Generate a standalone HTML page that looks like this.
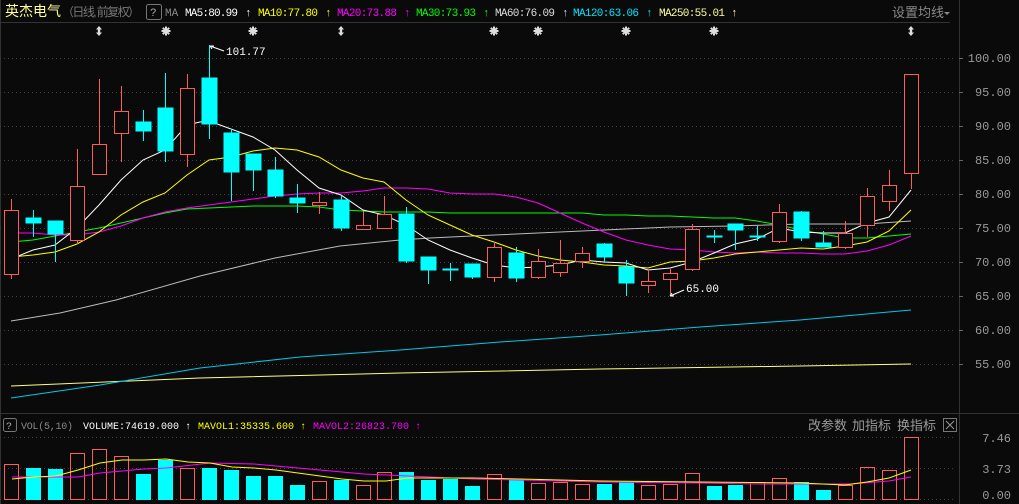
<!DOCTYPE html>
<html><head><meta charset="utf-8"><style>
html,body{margin:0;padding:0;background:#0a0a0a;}
svg{display:block;}
text{font-family:"Liberation Mono","Noto Sans CJK SC",monospace;}
.cn{font-family:"Liberation Sans","Noto Sans CJK SC",sans-serif;}
</style></head><body>
<svg width="1019" height="504" viewBox="0 0 1019 504" xmlns="http://www.w3.org/2000/svg">
<defs>
<g id="st" stroke="#ddd" stroke-width="2"><line x1="0" y1="-4.5" x2="0" y2="4.5"/><line x1="-4.5" y1="0" x2="4.5" y2="0"/><line x1="-3.2" y1="-3.2" x2="3.2" y2="3.2"/><line x1="-3.2" y1="3.2" x2="3.2" y2="-3.2"/><circle r="2.2" fill="#ddd" stroke="none"/></g>
<g id="ud" fill="#ddd"><path d="M0 -5 L3 -1.5 H1.2 V1.5 H3 L0 5 L-3 1.5 H-1.2 V-1.5 H-3 Z"/></g>
</defs>
<rect width="1019" height="504" fill="#0a0a0a"/>
<line x1="0.5" y1="0" x2="0.5" y2="504" stroke="#333"/>
<line x1="959.5" y1="0" x2="959.5" y2="504" stroke="#333"/>
<line x1="0" y1="22.5" x2="950" y2="22.5" stroke="#333"/>
<line x1="0" y1="413.5" x2="1019" y2="413.5" stroke="#333"/>
<!-- header -->
<text x="5" y="16" class="cn" font-size="14" fill="#ffff99">英杰电气</text>
<text x="62" y="16" class="cn" font-size="12" fill="#777" textLength="78">（日线, 前复权）</text>
<rect x="146.5" y="4.5" width="15" height="15" rx="2" fill="none" stroke="#777"/>
<text x="150" y="16" font-size="11" fill="#aaa">?</text>
<g font-size="11">
<text x="165" y="16" fill="#888">MA</text>
<text x="185" y="16" fill="#fff" textLength="53">MA5:80.99</text><text x="245" y="16" fill="#fff">↑</text>
<text x="258" y="16" fill="#ffff00" textLength="60">MA10:77.80</text><text x="325" y="16" fill="#ffff00">↑</text>
<text x="337" y="16" fill="#ff00ff" textLength="60">MA20:73.88</text><text x="404" y="16" fill="#ff00ff">↑</text>
<text x="416" y="16" fill="#00ff00" textLength="60">MA30:73.93</text><text x="483" y="16" fill="#00ff00">↑</text>
<text x="495" y="16" fill="#ddd" textLength="60">MA60:76.09</text><text x="562" y="16" fill="#ddd">↑</text>
<text x="573" y="16" fill="#00e5ff" textLength="66">MA120:63.06</text><text x="646" y="16" fill="#00e5ff">↑</text>
<text x="659" y="16" fill="#ffff99" textLength="66">MA250:55.01</text><text x="731" y="16" fill="#ffff99">↑</text>
</g>
<text x="892" y="17" class="cn" font-size="13" fill="#888">设置均线</text>
<path d="M944 12h6l-3 3z" fill="#888"/>
<!-- markers -->
<use href="#ud" x="99" y="31"/><use href="#ud" x="341" y="31"/><use href="#ud" x="911" y="31"/>
<use href="#st" x="166" y="31"/><use href="#st" x="253" y="31"/><use href="#st" x="494" y="31"/><use href="#st" x="538" y="31"/><use href="#st" x="626" y="31"/><use href="#st" x="714" y="31"/>
<!-- grid -->
<g stroke="#444" stroke-dasharray="1,3">
<line x1="0" y1="58.5" x2="956" y2="58.5"/><line x1="0" y1="92.5" x2="956" y2="92.5"/><line x1="0" y1="126.5" x2="956" y2="126.5"/><line x1="0" y1="160.5" x2="956" y2="160.5"/><line x1="0" y1="194.5" x2="956" y2="194.5"/><line x1="0" y1="228.5" x2="956" y2="228.5"/><line x1="0" y1="262.5" x2="956" y2="262.5"/><line x1="0" y1="296.5" x2="956" y2="296.5"/><line x1="0" y1="330.5" x2="956" y2="330.5"/><line x1="0" y1="364.5" x2="956" y2="364.5"/>
<line x1="0" y1="437.5" x2="956" y2="437.5"/><line x1="0" y1="468.5" x2="956" y2="468.5"/><line x1="0" y1="499.5" x2="956" y2="499.5"/>
</g>
<g font-size="12" fill="#999" text-anchor="end">
<text x="1011" y="62">100.00</text><text x="1011" y="96">95.00</text><text x="1011" y="130">90.00</text><text x="1011" y="164">85.00</text><text x="1011" y="198">80.00</text><text x="1011" y="232">75.00</text><text x="1011" y="266">70.00</text><text x="1011" y="300">65.00</text><text x="1011" y="334">60.00</text><text x="1011" y="368">55.00</text>
<text x="1011" y="442">7.46</text><text x="1011" y="473">3.73</text><text x="1011" y="499">0.00</text>
</g>
<g stroke="#666"><line x1="959" y1="58.5" x2="963" y2="58.5"/><line x1="959" y1="92.5" x2="963" y2="92.5"/><line x1="959" y1="126.5" x2="963" y2="126.5"/><line x1="959" y1="160.5" x2="963" y2="160.5"/><line x1="959" y1="194.5" x2="963" y2="194.5"/><line x1="959" y1="228.5" x2="963" y2="228.5"/><line x1="959" y1="262.5" x2="963" y2="262.5"/><line x1="959" y1="296.5" x2="963" y2="296.5"/><line x1="959" y1="330.5" x2="963" y2="330.5"/><line x1="959" y1="364.5" x2="963" y2="364.5"/></g>
<!-- MA lines -->
<g fill="none" stroke-width="1">
<polyline stroke="#ffff88" points="11,386 200,378 400,373 600,369 800,366 911,364"/>
<polyline stroke="#00c8e8" points="11,398 100,385 200,368 300,357 400,350 500,342 600,335 700,327 800,320 911,310"/>
<polyline stroke="#bbb" points="11,321 60,313 116,300 200,276 275,258 340,246 400,240 430,238 472,236 538,233 604,230 670,227 735,226 801,224 867,224 911,221"/>
<polyline stroke="#00ff00" points="11,242 33,240 55,236 77,232 99,228 121,223 143,218 165,213 187,209 209,208 231,207 253,206 275,206 297,206 319,207 341,210 363,211 384,212 406,212 428,212 450,213 472,213 494,213 516,213 538,213 560,213 582,213 604,215 626,215 648,216 670,216 692,217 714,218 735,218 757,221 779,225 801,230 823,234 845,238 867,238 889,236 911,234"/>
<polyline stroke="#ff00ff" points="11,233 33,233 55,235 77,235 99,232 121,226 143,218 165,212 187,208 209,205 231,202 253,199 275,196 297,194 319,193 341,193 363,191 384,188 406,188 428,189 450,193 472,194 494,194 516,197 538,203 560,213 582,223 604,232 626,240 648,245 670,249 692,250 714,252 735,253 757,252 779,253 801,253 823,254 845,254 867,251 889,245 911,236"/>
<polyline stroke="#ffff00" points="11,257 33,255 55,252 77,244 99,232 121,215 143,202 165,193 187,175 209,160 231,157 253,151 275,148 297,150 319,157 341,170 363,178 384,182 406,200 428,215 450,225 472,235 494,242 516,250 538,256 560,260 582,262 604,265 626,266 648,268 670,262 692,261 714,258 735,254 757,252 779,250 801,248 823,249 845,246 867,242 889,231 911,210"/>
<polyline stroke="#fff" points="11,259 33,250 55,245 77,228 99,205 121,180 143,160 165,150 187,125 200,122 209,121 220,125 253,137 275,150 297,170 319,188 341,195 363,210 384,215 406,225 428,240 450,250 472,258 494,265 516,268 538,267 560,265 582,260 604,262 626,263 648,270 670,268 692,262 714,253 735,244 757,239 779,228 801,232 823,233 845,233 867,223 889,217 911,190"/>
</g>
<!-- candles -->
<g stroke="#ff5b5b" fill="#0a0a0a">
<line x1="11.5" y1="199" x2="11.5" y2="279"/><rect x="4.5" y="210.5" width="14" height="64"/>
<line x1="77.5" y1="149" x2="77.5" y2="244"/><rect x="70.5" y="186.5" width="14" height="54"/>
<line x1="99.5" y1="79" x2="99.5" y2="174"/><rect x="92.5" y="144.5" width="14" height="30"/>
<line x1="121.5" y1="86" x2="121.5" y2="162"/><rect x="114.5" y="111.5" width="14" height="22"/>
<line x1="187.5" y1="74" x2="187.5" y2="167"/><rect x="180.5" y="88.5" width="14" height="66"/>
<line x1="319.5" y1="192" x2="319.5" y2="214"/><rect x="312.5" y="202.5" width="14" height="3"/>
<line x1="363.5" y1="211" x2="363.5" y2="229"/><rect x="356.5" y="225.5" width="14" height="4"/>
<line x1="384.5" y1="196" x2="384.5" y2="228"/><rect x="377.5" y="214.5" width="14" height="14"/>
<line x1="494.5" y1="242" x2="494.5" y2="282"/><rect x="487.5" y="247.5" width="14" height="30"/>
<line x1="538.5" y1="249" x2="538.5" y2="279"/><rect x="531.5" y="261.5" width="14" height="16"/>
<line x1="560.5" y1="240" x2="560.5" y2="277"/><rect x="553.5" y="263.5" width="14" height="9"/>
<line x1="582.5" y1="247" x2="582.5" y2="268"/><rect x="575.5" y="253.5" width="14" height="8"/>
<line x1="648.5" y1="269" x2="648.5" y2="293"/><rect x="641.5" y="281.5" width="14" height="4"/>
<line x1="670.5" y1="269" x2="670.5" y2="296"/><rect x="663.5" y="273.5" width="14" height="6"/>
<line x1="692.5" y1="224" x2="692.5" y2="271"/><rect x="685.5" y="229.5" width="14" height="40"/>
<line x1="779.5" y1="204" x2="779.5" y2="243"/><rect x="772.5" y="212.5" width="14" height="29"/>
<line x1="845.5" y1="221" x2="845.5" y2="249"/><rect x="838.5" y="233.5" width="14" height="14"/>
<line x1="867.5" y1="188" x2="867.5" y2="237"/><rect x="860.5" y="196.5" width="14" height="29"/>
<line x1="889.5" y1="170" x2="889.5" y2="211"/><rect x="882.5" y="185.5" width="14" height="16"/>
<line x1="911.5" y1="74" x2="911.5" y2="189"/><rect x="904.5" y="74.5" width="14" height="99"/>
</g>
<g stroke="#00ffff" fill="#00ffff">
<line x1="33.5" y1="210" x2="33.5" y2="237"/><rect x="26" y="218" width="15" height="5"/>
<line x1="55.5" y1="221" x2="55.5" y2="262"/><rect x="48" y="221" width="15" height="13"/>
<line x1="143.5" y1="110" x2="143.5" y2="141"/><rect x="136" y="122" width="15" height="9"/>
<line x1="165.5" y1="73" x2="165.5" y2="162"/><rect x="158" y="108" width="15" height="43"/>
<line x1="209.5" y1="45" x2="209.5" y2="139"/><rect x="202" y="78" width="15" height="46"/>
<line x1="231.5" y1="129" x2="231.5" y2="201"/><rect x="224" y="133" width="15" height="39"/>
<line x1="253.5" y1="154" x2="253.5" y2="191"/><rect x="246" y="154" width="15" height="16"/>
<line x1="275.5" y1="157" x2="275.5" y2="198"/><rect x="268" y="170" width="15" height="26"/>
<line x1="297.5" y1="184" x2="297.5" y2="213"/><rect x="290" y="198" width="15" height="5"/>
<line x1="341.5" y1="196" x2="341.5" y2="231"/><rect x="334" y="200" width="15" height="28"/>
<line x1="406.5" y1="207" x2="406.5" y2="263"/><rect x="399" y="214" width="15" height="47"/>
<line x1="428.5" y1="257" x2="428.5" y2="284"/><rect x="421" y="257" width="15" height="13"/>
<line x1="450.5" y1="263" x2="450.5" y2="281"/><rect x="443" y="269" width="15" height="1"/>
<line x1="472.5" y1="264" x2="472.5" y2="279"/><rect x="465" y="264" width="15" height="13"/>
<line x1="516.5" y1="247" x2="516.5" y2="282"/><rect x="509" y="253" width="15" height="25"/>
<line x1="604.5" y1="243" x2="604.5" y2="262"/><rect x="597" y="244" width="15" height="13"/>
<line x1="626.5" y1="260" x2="626.5" y2="296"/><rect x="619" y="267" width="15" height="16"/>
<line x1="714.5" y1="230" x2="714.5" y2="243"/><rect x="707" y="236" width="15" height="1"/>
<line x1="735.5" y1="224" x2="735.5" y2="250"/><rect x="728" y="224" width="15" height="6"/>
<line x1="757.5" y1="226" x2="757.5" y2="241"/><rect x="750" y="236" width="15" height="1"/>
<line x1="801.5" y1="211" x2="801.5" y2="241"/><rect x="794" y="212" width="15" height="26"/>
<line x1="823.5" y1="231" x2="823.5" y2="247"/><rect x="816" y="243" width="15" height="4"/>
</g>
<!-- annotations -->
<path d="M210 46 L224 51 M210 46 l4 0 M210 46 l2 3" stroke="#fff" fill="none"/>
<text x="226" y="55" font-size="11" fill="#fff">101.77</text>
<path d="M670 296 L684 290 M670 296 l4 0 M670 296 l2 -3" stroke="#fff" fill="none"/>
<text x="686" y="292" font-size="11" fill="#fff">65.00</text>
<!-- volume header -->
<rect x="3.5" y="418.5" width="13" height="13" rx="2" fill="none" stroke="#777"/>
<text x="6" y="429" font-size="10" fill="#aaa">?</text>
<g font-size="10">
<text x="21" y="429" fill="#888" textLength="52">VOL(5,10)</text>
<text x="83" y="429" fill="#fff" textLength="96">VOLUME:74619.000</text><text x="185" y="429" fill="#fff">↑</text>
<text x="198" y="429" fill="#ffff00" textLength="96">MAVOL1:35335.600</text><text x="300" y="429" fill="#ffff00">↑</text>
<text x="313" y="429" fill="#ff00ff" textLength="96">MAVOL2:26823.700</text><text x="415" y="429" fill="#ff00ff">↑</text>
</g>
<text x="808" y="430" class="cn" font-size="13" fill="#999">改参数</text>
<text x="852" y="430" class="cn" font-size="13" fill="#999">加指标</text>
<text x="897" y="430" class="cn" font-size="13" fill="#999">换指标</text>
<rect x="943.5" y="418.5" width="13" height="13" fill="none" stroke="#777"/>
<path d="M946 421l8 8M954 421l-8 8" stroke="#999"/>
<!-- volume bars -->
<g stroke="#ff5b5b" fill="none">
<rect x="4.5" y="464.5" width="14" height="35"/>
<rect x="70.5" y="453.5" width="14" height="46"/>
<rect x="92.5" y="449.5" width="14" height="50"/>
<rect x="114.5" y="456.5" width="14" height="43"/>
<rect x="180.5" y="468.5" width="14" height="31"/>
<rect x="312.5" y="481.5" width="14" height="18"/>
<rect x="356.5" y="485.5" width="14" height="14"/>
<rect x="377.5" y="472.5" width="14" height="27"/>
<rect x="487.5" y="474.5" width="14" height="25"/>
<rect x="531.5" y="483.5" width="14" height="16"/>
<rect x="553.5" y="482.5" width="14" height="17"/>
<rect x="575.5" y="484.5" width="14" height="15"/>
<rect x="641.5" y="485.5" width="14" height="14"/>
<rect x="663.5" y="484.5" width="14" height="15"/>
<rect x="685.5" y="473.5" width="14" height="26"/>
<rect x="750.5" y="482.5" width="14" height="17"/>
<rect x="772.5" y="478.5" width="14" height="21"/>
<rect x="838.5" y="485.5" width="14" height="14"/>
<rect x="860.5" y="467.5" width="14" height="32"/>
<rect x="882.5" y="470.5" width="14" height="29"/>
<rect x="904.5" y="437.5" width="14" height="62"/>
</g>
<g fill="#00ffff">
<rect x="26" y="468" width="15" height="32"/>
<rect x="48" y="469" width="15" height="31"/>
<rect x="136" y="474" width="15" height="26"/>
<rect x="158" y="460" width="15" height="40"/>
<rect x="202" y="468" width="15" height="32"/>
<rect x="224" y="470" width="15" height="30"/>
<rect x="246" y="476" width="15" height="24"/>
<rect x="268" y="476" width="15" height="24"/>
<rect x="290" y="485" width="15" height="15"/>
<rect x="334" y="480" width="15" height="20"/>
<rect x="399" y="472" width="15" height="28"/>
<rect x="421" y="480" width="15" height="20"/>
<rect x="443" y="479" width="15" height="21"/>
<rect x="465" y="486" width="15" height="14"/>
<rect x="509" y="479" width="15" height="21"/>
<rect x="597" y="484" width="15" height="16"/>
<rect x="619" y="482" width="15" height="18"/>
<rect x="707" y="486" width="15" height="14"/>
<rect x="728" y="485" width="15" height="15"/>
<rect x="794" y="482" width="15" height="18"/>
<rect x="816" y="490" width="15" height="10"/>
</g>
<g fill="none">
<polyline stroke="#ff00ff" points="12,477 56,477 78,477 100,473 144,469 166,468 210,463 254,464 276,466 320,470 364,474 408,476 474,479 520,480 600,482 700,483 760,484 850,484 889,481 911,477"/>
<polyline stroke="#ffff00" points="12,479 34,477 56,476 78,470 100,463 122,460 144,460 166,459 188,462 210,463 232,467 254,468 276,470 298,473 320,476 342,479 364,481 386,481 408,478 430,478 474,478 520,479 600,481 700,482 800,483 845,485 867,482 889,478 911,470"/>
</g>
</svg>
</body></html>
